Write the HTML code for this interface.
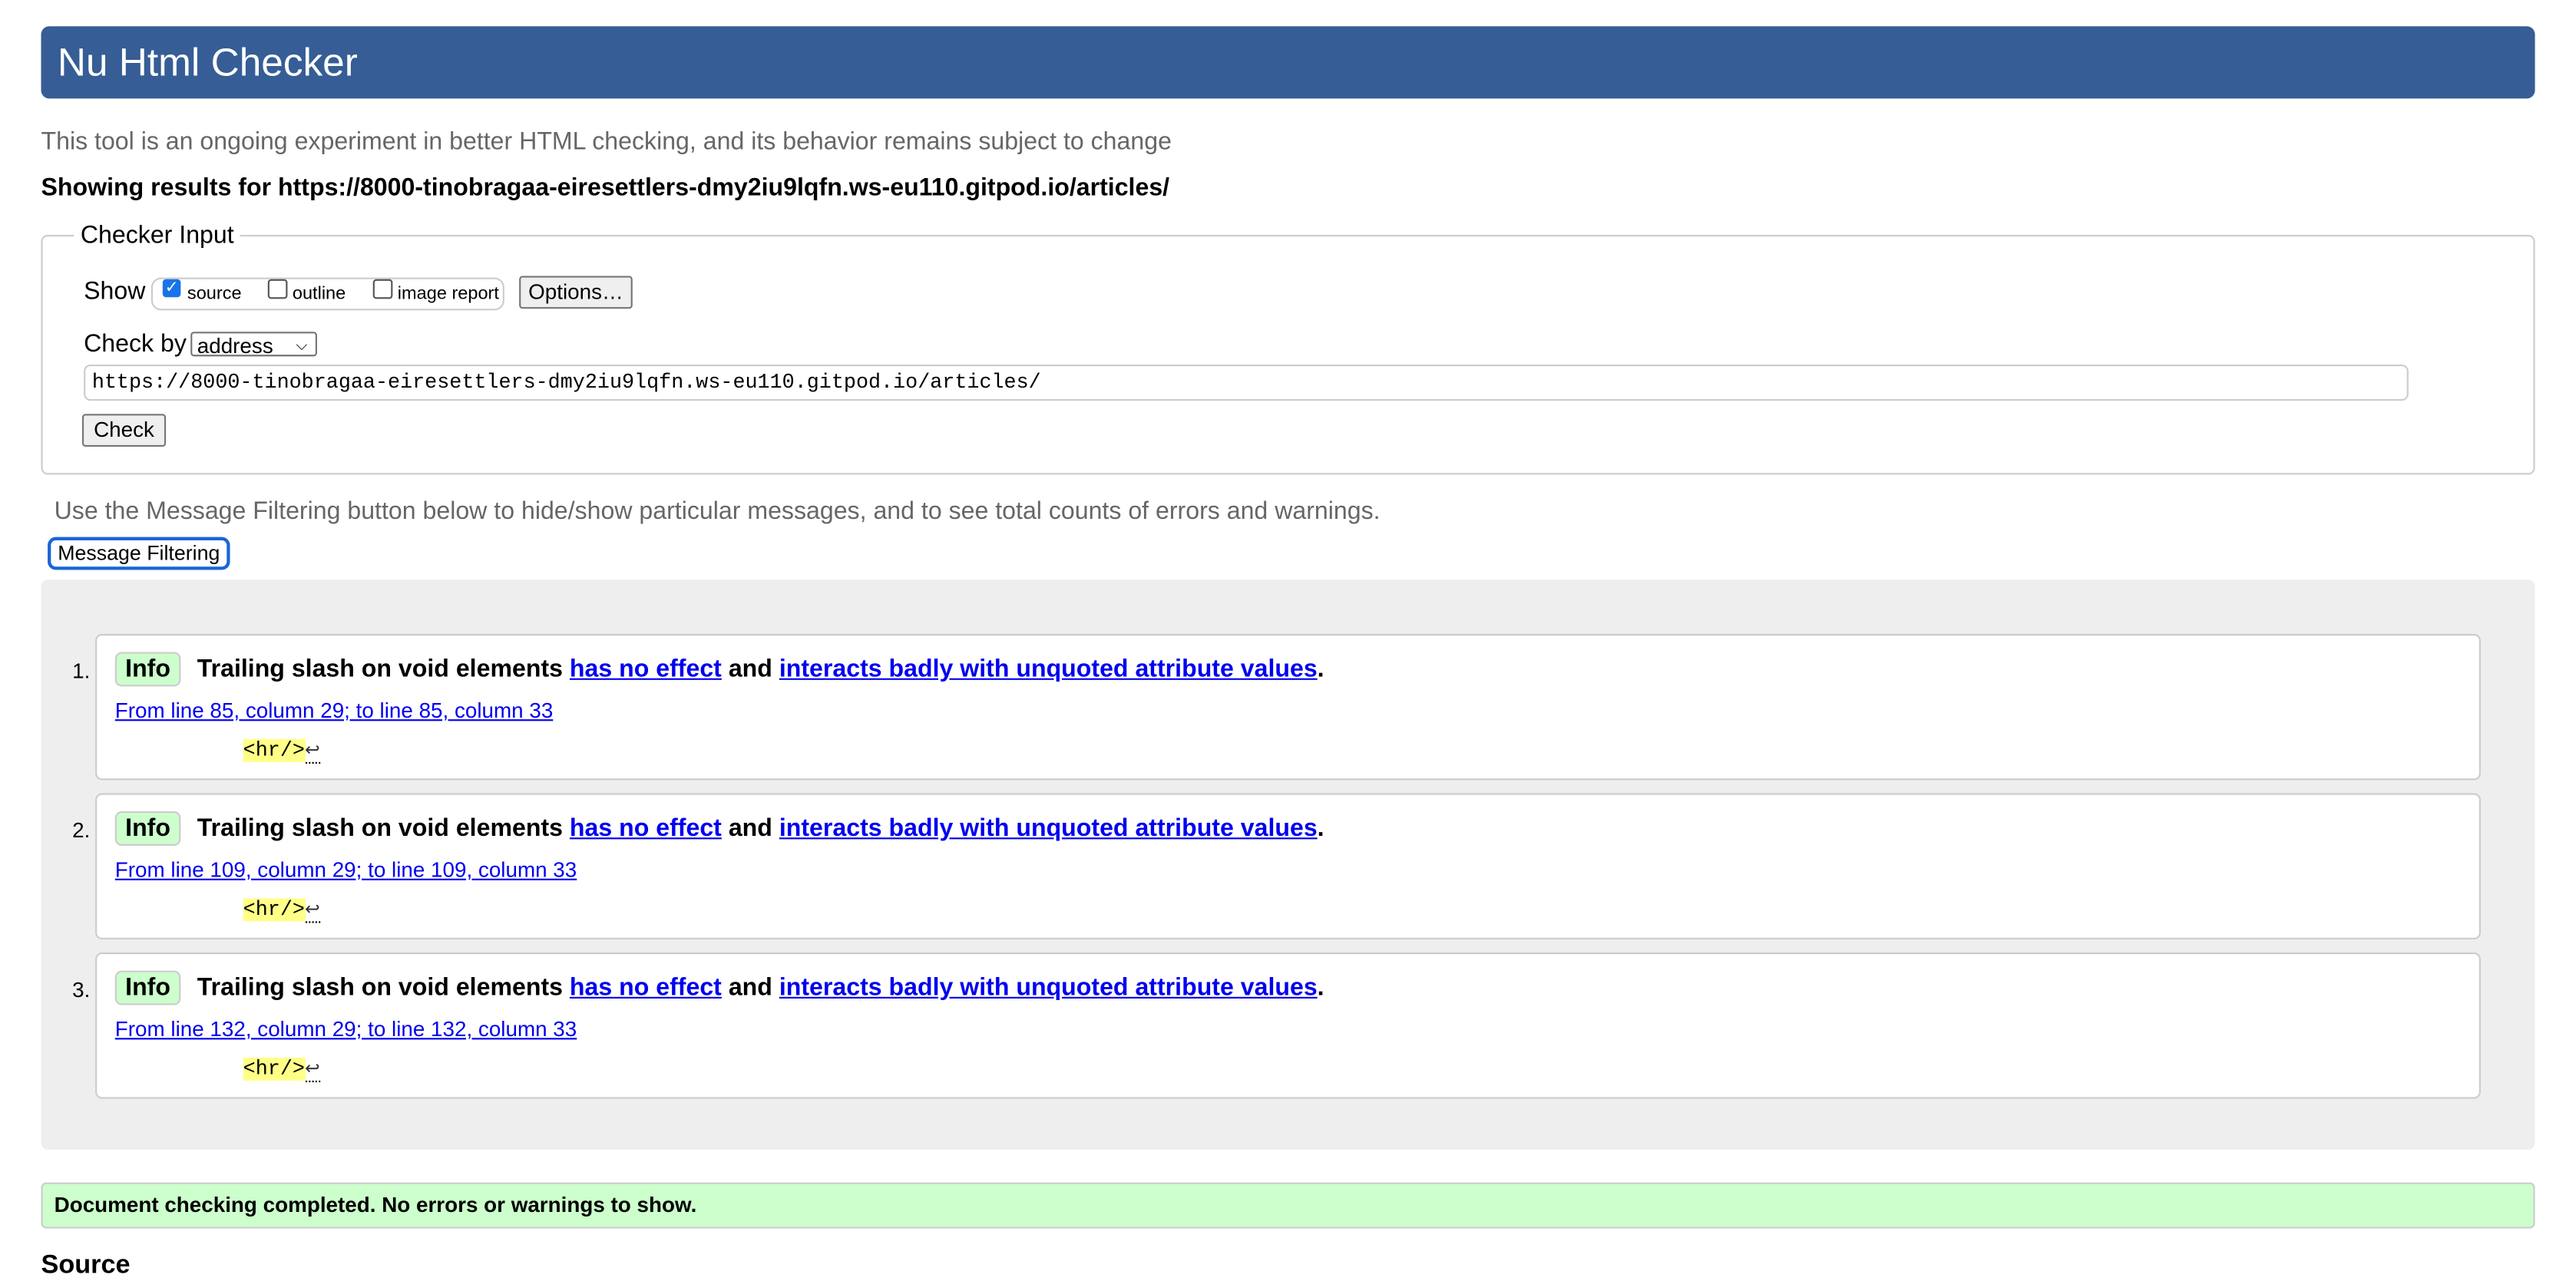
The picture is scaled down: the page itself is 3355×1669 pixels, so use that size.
<!DOCTYPE html>
<html><head><meta charset="utf-8"><style>
html,body{margin:0;padding:0;background:#fff;overflow:hidden;width:3355px;height:1634px}
#w{position:absolute;left:0;top:0;width:1568px;height:764px;transform:scale(2.1397);transform-origin:0 0;font-family:"Liberation Sans",Arial,sans-serif;color:#000}
.a{position:absolute;white-space:nowrap}
.mono{font-family:"Liberation Mono",monospace}
a{color:#00e}
.item{position:absolute;left:58px;width:1450px;height:87px;background:#fff;border:1px solid #ccc;border-radius:4px}
.num{position:absolute;left:-15px;top:14px;font-size:13px}
.badge{position:absolute;left:11px;top:10px;width:38px;height:19px;background:#cfc;border:1px solid #ccc;border-radius:4px;font-weight:bold;font-size:15px;text-align:center;line-height:19px}
.msg{position:absolute;left:61px;top:11px;font-weight:bold;font-size:15px;line-height:20px;white-space:nowrap}
.loc{position:absolute;left:11px;top:38px;font-size:13px}
.code{position:absolute;left:89px;top:61px;font-size:12.5px;line-height:18px}
.code b{font-weight:normal;background:#ff8}
.code i{font-style:normal;font-size:11px;border-bottom:1px dotted #000;color:#333}
</style></head><body><div id="w">
<div class="a" style="left:25px;top:16px;width:1518px;height:44px;background:#365d95;border-radius:5px"></div>
<div class="a" style="left:35px;top:24px;color:#fff;font-size:24px;line-height:30px">Nu Html Checker</div>
<div class="a" style="left:25px;top:78px;color:#666;font-size:15px;line-height:18px">This tool is an ongoing experiment in better HTML checking, and its behavior remains subject to change</div>
<div class="a" style="left:25px;top:106px;font-weight:bold;font-size:15px;line-height:18px">Showing results for https://8000-tinobragaa-eiresettlers-dmy2iu9lqfn.ws-eu110.gitpod.io/articles/</div>
<div class="a" style="left:25px;top:143px;width:1516px;height:144px;border:1px solid #ccc;border-radius:4px"></div>
<div class="a" style="left:45px;top:135px;background:#fff;padding:0 4px;font-size:15px;line-height:18px">Checker Input</div>
<div class="a" style="left:51px;top:169px;font-size:15px;line-height:18px">Show</div>
<div class="a" style="left:92px;top:169px;width:213px;height:18px;border:1px solid #ccc;border-radius:6px"></div>
<div class="a" style="left:99px;top:170px;width:11px;height:11px;background:#1a73e8;border-radius:2px;color:#fff;font-size:10px;line-height:11px;text-align:center">✓</div>
<div class="a" style="left:114px;top:173px;font-size:11px">source</div>
<div class="a" style="left:163px;top:170px;width:10px;height:10px;border:1px solid #555;border-radius:2px"></div>
<div class="a" style="left:178px;top:173px;font-size:11px">outline</div>
<div class="a" style="left:227px;top:170px;width:10px;height:10px;border:1px solid #555;border-radius:2px"></div>
<div class="a" style="left:242px;top:173px;font-size:11px">image report</div>
<div class="a" style="left:316px;top:168px;width:67px;height:18px;border:1px solid #767676;border-radius:2px;background:#efefef;font-size:13px;line-height:18px;text-align:center">Options…</div>
<div class="a" style="left:51px;top:201px;font-size:15px;line-height:18px">Check by</div>
<div class="a" style="left:116px;top:202px;height:15px;border:1px solid #767676;border-radius:2px;font-size:13px;line-height:15px;padding-left:3px;box-sizing:border-box;width:77px">address<span style="position:absolute;right:5px;font-size:9px">⌵</span></div>
<div class="a" style="left:51px;top:222px;width:1413px;height:20px;border:1px solid #ccc;border-radius:4px"></div>
<div class="a mono" style="left:56px;top:225px;font-size:12.5px;line-height:16px">https://8000-tinobragaa-eiresettlers-dmy2iu9lqfn.ws-eu110.gitpod.io/articles/</div>
<div class="a" style="left:50px;top:252px;width:49px;height:18px;border:1px solid #767676;border-radius:2px;background:#efefef;font-size:13px;line-height:18px;text-align:center">Check</div>
<div class="a" style="left:33px;top:303px;color:#666;font-size:15px;line-height:18px">Use the Message Filtering button below to hide/show particular messages, and to see total counts of errors and warnings.</div>
<div class="a" style="left:29px;top:327px;width:107px;height:16px;border:2px solid #1a65d6;border-radius:5px;font-size:12.5px;line-height:16px;text-align:center">Message Filtering</div>
<div class="a" style="left:25px;top:353px;width:1518px;height:347px;background:#eee;border-radius:4px"></div>

<div class="item" style="top:386px"><div class="num">1.</div><div class="badge">Info</div><div class="msg">Trailing slash on void elements <a href="#">has no effect</a> and <a href="#">interacts badly with unquoted attribute values</a>.</div><div class="loc"><a href="#">From line 85, column 29; to line 85, column 33</a></div><div class="code mono"><b>&lt;hr/&gt;</b><i>↩</i></div></div>
<div class="item" style="top:483px"><div class="num">2.</div><div class="badge">Info</div><div class="msg">Trailing slash on void elements <a href="#">has no effect</a> and <a href="#">interacts badly with unquoted attribute values</a>.</div><div class="loc"><a href="#">From line 109, column 29; to line 109, column 33</a></div><div class="code mono"><b>&lt;hr/&gt;</b><i>↩</i></div></div>
<div class="item" style="top:580px"><div class="num">3.</div><div class="badge">Info</div><div class="msg">Trailing slash on void elements <a href="#">has no effect</a> and <a href="#">interacts badly with unquoted attribute values</a>.</div><div class="loc"><a href="#">From line 132, column 29; to line 132, column 33</a></div><div class="code mono"><b>&lt;hr/&gt;</b><i>↩</i></div></div>

<div class="a" style="left:25px;top:720px;width:1516px;height:26px;background:#cfc;border:1px solid #ccc;border-radius:3px"></div>
<div class="a" style="left:33px;top:726px;font-weight:bold;font-size:13px;line-height:16px">Document checking completed. No errors or warnings to show.</div>
<div class="a" style="left:25px;top:762px;font-weight:bold;font-size:16px;line-height:18px">Source</div>
</div></body></html>
